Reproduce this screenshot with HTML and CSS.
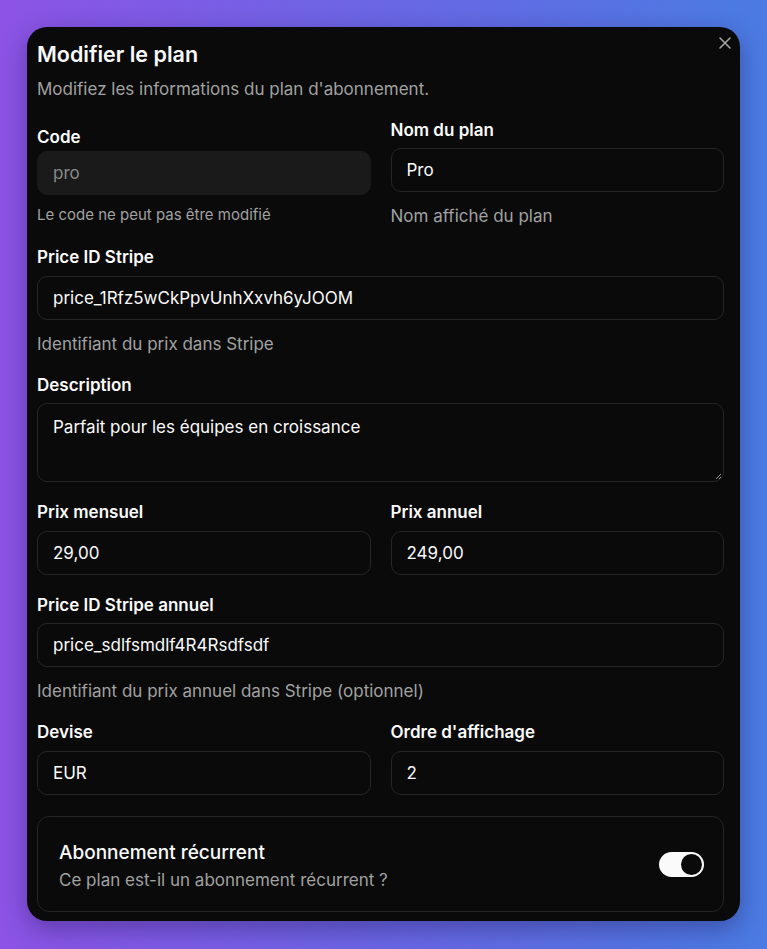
FILE: index.html
```html
<!DOCTYPE html>
<html lang="fr">
<head>
<meta charset="utf-8">
<title>Modifier le plan</title>
<link rel="stylesheet" href="styles.css">
</head>
<body>
<div class="modal">
  <button class="close" aria-label="Fermer">
    <svg width="14" height="14" viewBox="0 0 14 14"><path d="M2 2L12 12M12 2L2 12" stroke="#a3a3a3" stroke-width="1.6" stroke-linecap="round"/></svg>
  </button>
  <h2 class="title">Modifier le plan</h2>
  <p class="subtitle">Modifiez les informations du plan d'abonnement.</p>

  <div class="row first-row">
    <div class="col col-code">
      <label class="label label-tight">Code</label>
      <div class="input disabled">pro</div>
      <p class="hint-small">Le code ne peut pas être modifié</p>
    </div>
    <div class="col">
      <label class="label">Nom du plan</label>
      <div class="input">Pro</div>
      <p class="hint">Nom affiché du plan</p>
    </div>
  </div>

  <div class="field gap17">
    <label class="label">Price ID Stripe</label>
    <div class="input">price_1Rfz5wCkPpvUnhXxvh6yJOOM</div>
    <p class="hint">Identifiant du prix dans Stripe</p>
  </div>

  <div class="field gap17">
    <label class="label label-tight2">Description</label>
    <div class="textarea">Parfait pour les équipes en croissance
      <svg class="grip" width="8" height="8" viewBox="0 0 8 8"><path d="M7 2L2 7M7 5L5 7" stroke="#9a9a9a" stroke-width="1"/></svg>
    </div>
  </div>

  <div class="row gap18">
    <div class="col">
      <label class="label">Prix mensuel</label>
      <div class="input">29,00</div>
    </div>
    <div class="col">
      <label class="label">Prix annuel</label>
      <div class="input">249,00</div>
    </div>
  </div>

  <div class="field gap18">
    <label class="label label-tight2">Price ID Stripe annuel</label>
    <div class="input">price_sdlfsmdlf4R4Rsdfsdf</div>
    <p class="hint">Identifiant du prix annuel dans Stripe (optionnel)</p>
  </div>

  <div class="row gap17">
    <div class="col">
      <label class="label">Devise</label>
      <div class="input">EUR</div>
    </div>
    <div class="col">
      <label class="label">Ordre d'affichage</label>
      <div class="input">2</div>
    </div>
  </div>

  <div class="card">
    <div class="card-text">
      <div class="card-title">Abonnement récurrent</div>
      <div class="card-sub">Ce plan est-il un abonnement récurrent ?</div>
    </div>
    <div class="switch"><span class="knob"></span></div>
  </div>
</div>
</body>
</html>
```

FILE: styles.css
```css
* { box-sizing: border-box; }
html, body { margin: 0; padding: 0; }
body {
  width: 767px;
  height: 949px;
  overflow: hidden;
  background: linear-gradient(90deg, #8c53e5 0%, #6a66e4 50%, #4a7be2 100%);
  font-family: Inter, "Noto Sans", "Liberation Sans", sans-serif;
  color: #fafafa;
  padding: 27px 0 0 27px;
}
.modal {
  position: relative;
  width: 713px;
  height: 894px;
  background: #0a0a0a;
  border-radius: 20px;
  padding: 13px 16px 0 10px;
  box-shadow: 0 8px 24px rgba(20, 10, 60, 0.35);
  overflow: hidden;
}
.close {
  position: absolute;
  top: 9px;
  right: 8px;
  width: 14px;
  height: 14px;
  padding: 0;
  border: 0;
  background: none;
  display: flex;
}
.title {
  margin: 0;
  font-size: 21.5px;
  line-height: 28px;
  font-weight: 600;
}
.subtitle {
  margin: 9px 0 0;
  font-size: 17px;
  line-height: 24px;
  color: #a1a1a1;
}
.row {
  display: grid;
  grid-template-columns: 1fr 1fr;
  column-gap: 20px;
  align-items: start;
}
.first-row { margin-top: 17px; }
.col-code { padding-top: 7px; }
.gap17 { margin-top: 17px; }
.gap18 { margin-top: 18px; }
.label {
  display: block;
  font-size: 17px;
  line-height: 24px;
  font-weight: 600;
  margin-bottom: 7px;
}
.label-tight { margin-bottom: 2px; }
.label-tight2 { margin-bottom: 6px; }
.col:not(.col-code) > .label { margin-bottom: 6px; }
.row.gap18 .col > .label,
.row.gap17 .col > .label { margin-bottom: 7px; }
.input {
  height: 44px;
  border: 1px solid #262626;
  border-radius: 10px;
  background: #0a0a0a;
  padding: 0 15px;
  display: flex;
  align-items: center;
  font-size: 17px;
  color: #fafafa;
}
.input.disabled {
  background: #1a1a1a;
  border-color: #1a1a1a;
  color: #8a8a8a;
}
.hint {
  margin: 12px 0 0;
  font-size: 17px;
  line-height: 24px;
  color: #a1a1a1;
}
.hint-small {
  margin: 10px 0 0;
  font-size: 15px;
  line-height: 20px;
  color: #a1a1a1;
}
.textarea {
  position: relative;
  height: 79px;
  border: 1px solid #262626;
  border-radius: 10px;
  padding: 11px 15px;
  font-size: 17px;
  line-height: 24px;
}
.grip {
  position: absolute;
  right: 1px;
  bottom: 1px;
}
.card {
  margin-top: 21px;
  height: 96px;
  border: 1px solid #262626;
  border-radius: 12px;
  display: flex;
  align-items: center;
  justify-content: space-between;
  padding: 0 19px 0 21px;
}
.card-text { padding-top: 3px; }
.card-title {
  font-size: 19px;
  line-height: 28px;
  font-weight: 500;
}
.card-sub {
  margin-top: 1px;
  font-size: 17px;
  line-height: 24px;
  color: #a1a1a1;
}
.switch {
  width: 45px;
  height: 25px;
  border-radius: 13px;
  background: #fafafa;
  display: flex;
  align-items: center;
  justify-content: flex-end;
  padding: 2px;
  margin-top: 1px;
}
.knob {
  width: 21px;
  height: 21px;
  border-radius: 50%;
  background: #0a0a0a;
}
```
